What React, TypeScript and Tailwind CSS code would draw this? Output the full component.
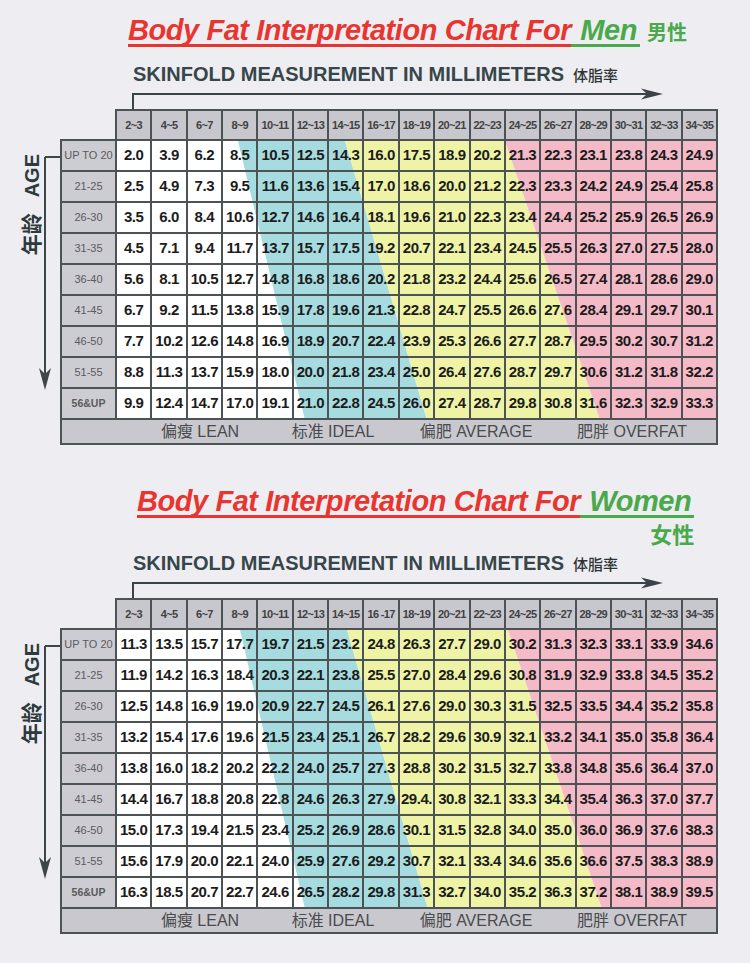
import React from 'react';

const men: string[][] = [
  ['2.0', '3.9', '6.2', '8.5', '10.5', '12.5', '14.3', '16.0', '17.5', '18.9', '20.2', '21.3', '22.3', '23.1', '23.8', '24.3', '24.9'],
  ['2.5', '4.9', '7.3', '9.5', '11.6', '13.6', '15.4', '17.0', '18.6', '20.0', '21.2', '22.3', '23.3', '24.2', '24.9', '25.4', '25.8'],
  ['3.5', '6.0', '8.4', '10.6', '12.7', '14.6', '16.4', '18.1', '19.6', '21.0', '22.3', '23.4', '24.4', '25.2', '25.9', '26.5', '26.9'],
  ['4.5', '7.1', '9.4', '11.7', '13.7', '15.7', '17.5', '19.2', '20.7', '22.1', '23.4', '24.5', '25.5', '26.3', '27.0', '27.5', '28.0'],
  ['5.6', '8.1', '10.5', '12.7', '14.8', '16.8', '18.6', '20.2', '21.8', '23.2', '24.4', '25.6', '26.5', '27.4', '28.1', '28.6', '29.0'],
  ['6.7', '9.2', '11.5', '13.8', '15.9', '17.8', '19.6', '21.3', '22.8', '24.7', '25.5', '26.6', '27.6', '28.4', '29.1', '29.7', '30.1'],
  ['7.7', '10.2', '12.6', '14.8', '16.9', '18.9', '20.7', '22.4', '23.9', '25.3', '26.6', '27.7', '28.7', '29.5', '30.2', '30.7', '31.2'],
  ['8.8', '11.3', '13.7', '15.9', '18.0', '20.0', '21.8', '23.4', '25.0', '26.4', '27.6', '28.7', '29.7', '30.6', '31.2', '31.8', '32.2'],
  ['9.9', '12.4', '14.7', '17.0', '19.1', '21.0', '22.8', '24.5', '26.0', '27.4', '28.7', '29.8', '30.8', '31.6', '32.3', '32.9', '33.3'],
];

const women: string[][] = [
  ['11.3', '13.5', '15.7', '17.7', '19.7', '21.5', '23.2', '24.8', '26.3', '27.7', '29.0', '30.2', '31.3', '32.3', '33.1', '33.9', '34.6'],
  ['11.9', '14.2', '16.3', '18.4', '20.3', '22.1', '23.8', '25.5', '27.0', '28.4', '29.6', '30.8', '31.9', '32.9', '33.8', '34.5', '35.2'],
  ['12.5', '14.8', '16.9', '19.0', '20.9', '22.7', '24.5', '26.1', '27.6', '29.0', '30.3', '31.5', '32.5', '33.5', '34.4', '35.2', '35.8'],
  ['13.2', '15.4', '17.6', '19.6', '21.5', '23.4', '25.1', '26.7', '28.2', '29.6', '30.9', '32.1', '33.2', '34.1', '35.0', '35.8', '36.4'],
  ['13.8', '16.0', '18.2', '20.2', '22.2', '24.0', '25.7', '27.3', '28.8', '30.2', '31.5', '32.7', '33.8', '34.8', '35.6', '36.4', '37.0'],
  ['14.4', '16.7', '18.8', '20.8', '22.8', '24.6', '26.3', '27.9', '29.4.', '30.8', '32.1', '33.3', '34.4', '35.4', '36.3', '37.0', '37.7'],
  ['15.0', '17.3', '19.4', '21.5', '23.4', '25.2', '26.9', '28.6', '30.1', '31.5', '32.8', '34.0', '35.0', '36.0', '36.9', '37.6', '38.3'],
  ['15.6', '17.9', '20.0', '22.1', '24.0', '25.9', '27.6', '29.2', '30.7', '32.1', '33.4', '34.6', '35.6', '36.6', '37.5', '38.3', '38.9'],
  ['16.3', '18.5', '20.7', '22.7', '24.6', '26.5', '28.2', '29.8', '31.3', '32.7', '34.0', '35.2', '36.3', '37.2', '38.1', '38.9', '39.5'],
];

const ages = ['UP TO 20', '21-25', '26-30', '31-35', '36-40', '41-45', '46-50', '51-55', '56&UP'];

const menCols = ['2~3', '4~5', '6~7', '8~9', '10~11', '12~13', '14~15', '16~17', '18~19', '20~21', '22~23', '24~25', '26~27', '28~29', '30~31', '32~33', '34~35'];
const womenCols = menCols.map((c) => (c === '16~17' ? '16 -17' : c));

// band edges in the data area (601 x 279): [top x, bottom x]
type Bands = { lean: [number, number]; ideal: [number, number]; avg: [number, number] };
const menBands: Bands = { lean: [121, 188], ideal: [228, 310], avg: [388, 483] };
const womenBands: Bands = { lean: [123, 188], ideal: [230, 311], avg: [391, 485] };

const BandFill: React.FC<{ b: Bands }> = ({ b }) => (
  <svg className="absolute inset-0 w-full h-full" viewBox="0 0 601 279" preserveAspectRatio="none">
    <rect x="0" y="0" width="601" height="279" fill="#ffffff" />
    <polygon points={`${b.lean[0]},0 ${b.ideal[0]},0 ${b.ideal[1]},279 ${b.lean[1]},279`} fill="#a6dbdf" />
    <polygon points={`${b.ideal[0]},0 ${b.avg[0]},0 ${b.avg[1]},279 ${b.ideal[1]},279`} fill="#eef3a5" />
    <polygon points={`${b.avg[0]},0 601,0 601,279 ${b.avg[1]},279`} fill="#f4bac7" />
  </svg>
);

const AgeColumn: React.FC = () => (
  <div className="flex w-[60px] h-[336px]">
    <div className="w-[38px] pl-[22px] pt-[45px]">
      <div className="[writing-mode:vertical-rl] [text-orientation:sideways] rotate-180 leading-[20px] font-bold text-[#2f3a3c] flex items-center">
        <span className="text-[21px]">年龄</span>
        <span className="text-[20px] mt-[16px]">AGE</span>
      </div>
    </div>
    <svg width="22" height="336" className="block shrink-0">
      <path d="M7 48 H22 M7 48 V266" stroke="#3d4648" strokeWidth="2" fill="none" />
      <path d="M7 281 L1 259 L7 265 L13 259 Z" fill="#3d4648" />
    </svg>
  </div>
);

const Table: React.FC<{ cols: string[]; data: string[][]; bands: Bands }> = ({ cols, data, bands }) => (
  <div className="flex">
    <AgeColumn />
    <div className="w-[658px]">
      <div className="flex h-[30px]">
        <div className="w-[57px] border-r-2 border-[#4d5354]" />
        <div className="flex-1 grid grid-cols-17 border-t-2 border-[#4d5354] bg-[#c8c7cd]">
          {cols.map((c) => (
            <div key={c} className="border-r-2 border-[#4d5354] flex items-center justify-center text-[11px] font-bold tracking-[-0.06em] text-[#3f4243]">
              {c}
            </div>
          ))}
        </div>
      </div>
      <div className="flex">
        <div className="w-[57px] border-l-2 border-t-2 border-[#4d5354] bg-[#cdccd2]">
          {ages.map((a) => (
            <div
              key={a}
              className={`h-[31px] border-r-2 border-b-2 border-[#4d5354] flex items-center justify-center text-[#5a5b5e] ${
                a === '56&UP' ? 'text-[10.5px] font-bold' : 'text-[11px]'
              }`}
            >
              {a}
            </div>
          ))}
        </div>
        <div className="flex-1 relative border-t-2 border-[#4d5354]">
          <BandFill b={bands} />
          <div className="relative grid grid-cols-17">
            {data.map((row, r) =>
              row.map((v, c) => (
                <div
                  key={`${r}-${c}`}
                  className="h-[31px] border-r-2 border-b-2 border-[#4d5354] flex items-center justify-center text-[15px] font-bold tracking-[-0.03em] text-[#1c1c1c]"
                >
                  {v}
                </div>
              ))
            )}
          </div>
        </div>
      </div>
      <div className="h-[25px] border-l-2 border-r-2 border-b-2 border-[#4d5354] bg-[#c9c8ce] flex items-center text-[16px] text-[#4a4b4d]">
        <span className="w-[130px] ml-[73px] text-center">偏瘦 LEAN</span>
        <span className="w-[130px] ml-[3px] text-center">标准 IDEAL</span>
        <span className="w-[130px] ml-[13px] text-center">偏肥 AVERAGE</span>
        <span className="w-[130px] ml-[26px] text-center">肥胖 OVERFAT</span>
      </div>
    </div>
  </div>
);

const Measure: React.FC = () => (
  <>
    <div className="pl-[133px] text-[20px] leading-[20px] font-bold text-[#37464a]">
      SKINFOLD MEASUREMENT IN MILLIMETERS
      <span className="ml-[9px] text-[15px] font-medium text-[#2e3436]">体脂率</span>
    </div>
    <svg width="540" height="23" className="block ml-[132px]">
      <path d="M1 23 V8 H520" stroke="#3a4448" strokeWidth="2" fill="none" />
      <path d="M531 8 L509 2.5 L515 8 L509 13.5 Z" fill="#3a4448" />
    </svg>
  </>
);

export default function App() {
  return (
    <div className="w-[750px] h-[963px] overflow-hidden bg-[#eeeef2] font-[family-name:'Liberation_Sans','Noto_Sans_CJK_SC',sans-serif]">
      {/* men */}
      <div className="pl-[128px] pt-[17px] text-[29px] leading-[27px] font-bold italic tracking-[-0.015em]">
        <span className="inline-block border-b-[3px] border-[#e8352f] text-[#e8352f]">Body Fat Interpretation Chart For</span>
        <span className="inline-block border-b-[3px] border-[#49a94b] text-[#49a94b] pl-[9px] pr-[3px]">Men</span>
        <span className="ml-[7px] text-[20px] not-italic tracking-normal text-[#49a94b]">男性</span>
      </div>
      <div className="mt-[17px]">
        <Measure />
      </div>
      <Table cols={menCols} data={men} bands={menBands} />

      {/* women */}
      <div className="pl-[137px] pt-[43px]">
        <div className="inline-flex flex-col items-end">
          <div className="text-[29px] leading-[27px] font-bold italic tracking-[-0.015em]">
            <span className="inline-block border-b-[3px] border-[#e8352f] text-[#e8352f]">Body Fat Interpretation Chart For</span>
            <span className="inline-block border-b-[3px] border-[#49a94b] text-[#49a94b] pl-[9px] pr-[3px]">Women</span>
          </div>
          <div className="mt-[7px] text-[22px] leading-[22px] font-bold text-[#49a94b]">女性</div>
        </div>
      </div>
      <div className="mt-[6px]">
        <Measure />
      </div>
      <Table cols={womenCols} data={women} bands={womenBands} />
    </div>
  );
}
